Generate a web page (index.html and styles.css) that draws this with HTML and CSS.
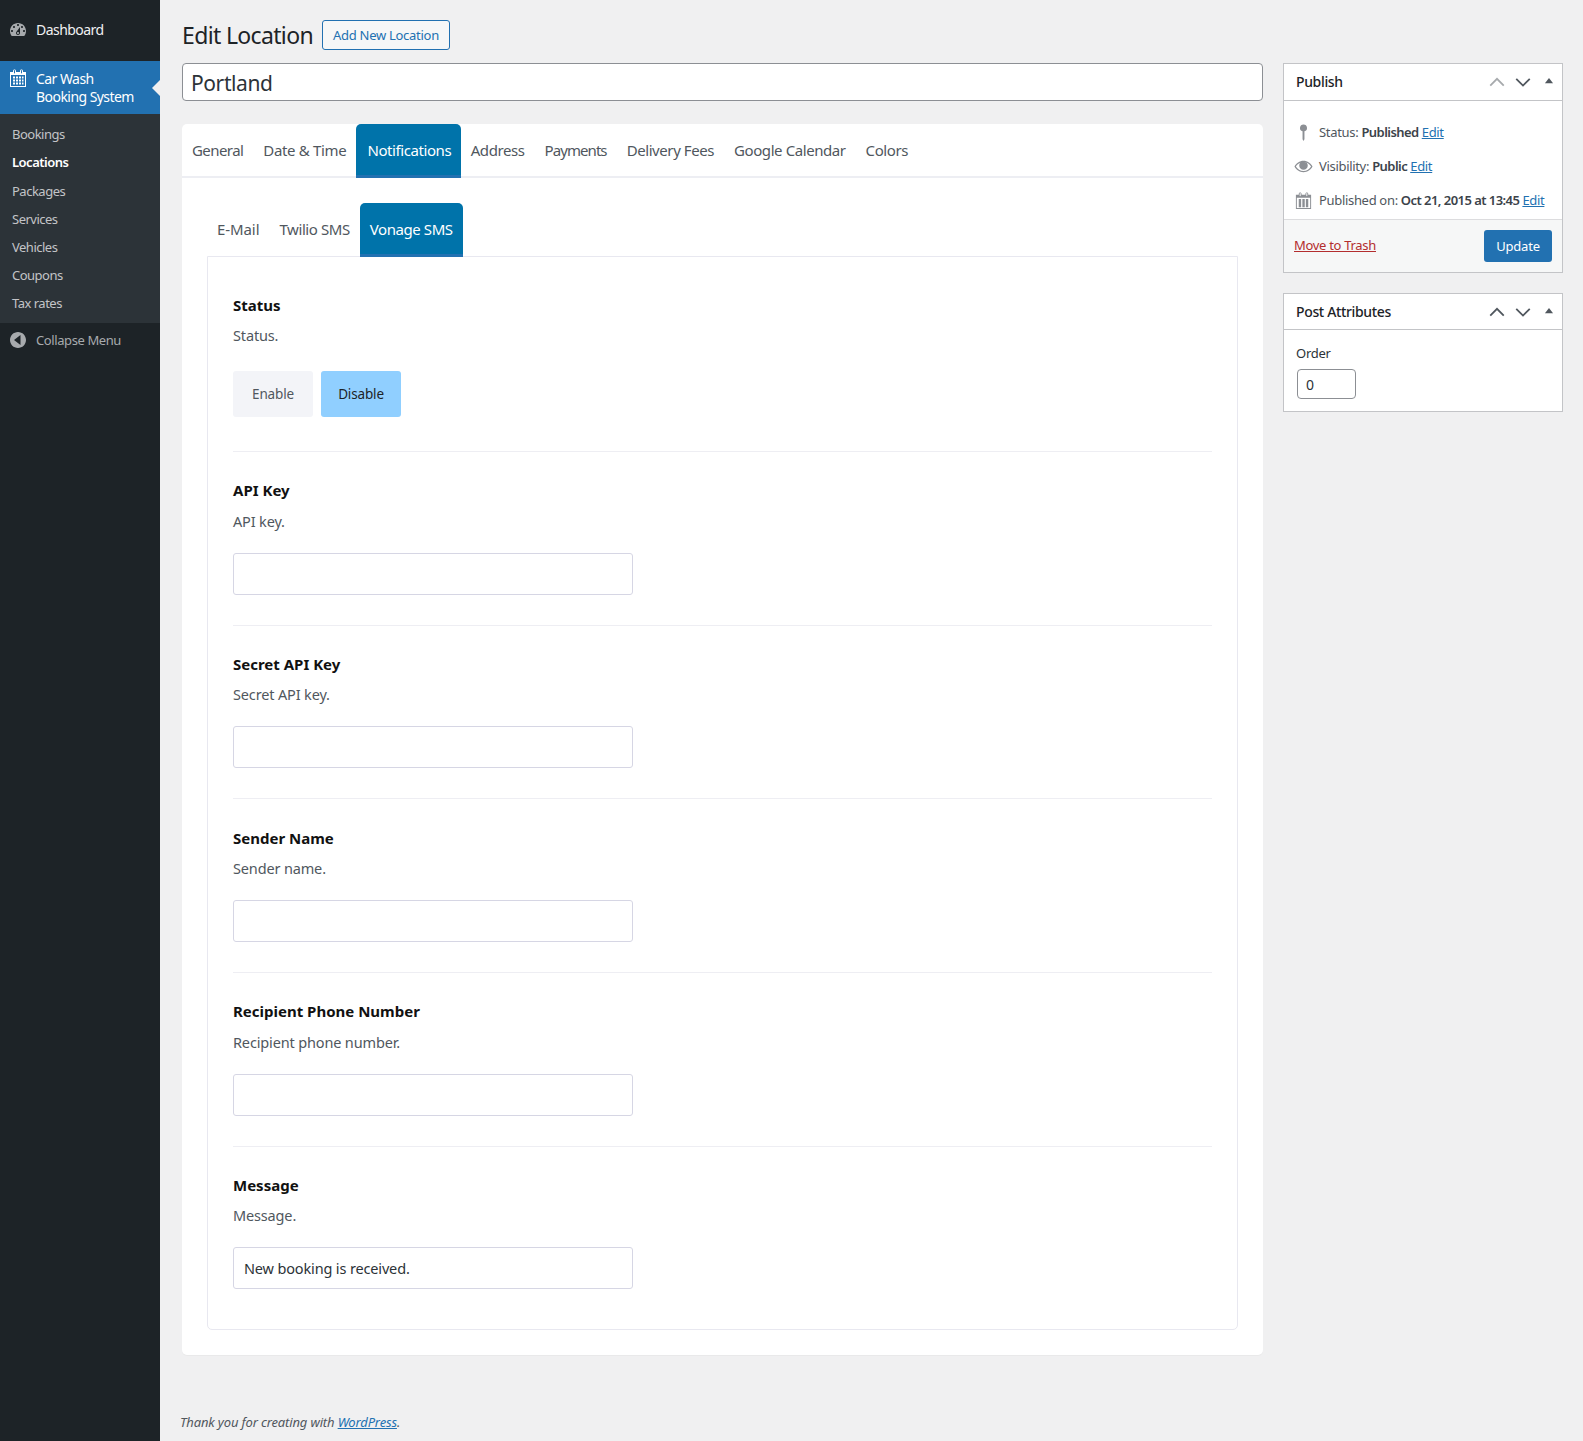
FILE: index.html
```html
<!DOCTYPE html>
<html lang="en">
<head>
<meta charset="utf-8">
<title>Edit Location</title>
<link rel="stylesheet" href="styles.css">
</head>
<body>
<div class="layout">
  <nav class="sidebar">
    <a class="menu-top dash">
      <svg class="mi" viewBox="0 0 20 20"><path d="M3.760 16h12.480c1.100-1.370 1.760-3.110 1.760-5 0-4.420-3.580-8-8-8s-8 3.580-8 8c0 1.890.66 3.630 1.760 5zM10 4c.55 0 1 .45 1 1s-.45 1-1 1-1-.45-1-1 .45-1 1-1zM6 6c.55 0 1 .45 1 1s-.45 1-1 1-1-.45-1-1 .45-1 1-1zm8 0c.55 0 1 .45 1 1s-.45 1-1 1-1-.45-1-1 .45-1 1-1zm-5.370 5.550L12 7v6c0 1.100-.9 2-2 2s-2-.9-2-2c0-.57.24-1.080.63-1.450zM4 10c.55 0 1 .45 1 1s-.45 1-1 1-1-.45-1-1 .45-1 1-1zm12 0c.55 0 1 .45 1 1s-.45 1-1 1-1-.45-1-1 .45-1 1-1zm-5 3c0-.55-.45-1-1-1s-1 .45-1 1 .45 1 1 1 1-.45 1-1z"/></svg>
      <span>Dashboard</span>
    </a>
    <a class="menu-top current">
      <svg class="mi white" viewBox="0 0 20 20"><path fill-rule="evenodd" d="M15 4h3v15H2V4h3V3c0-.8.7-1.500 1.500-1.500S8 2.200 8 3v1h4V3c0-.8.7-1.500 1.500-1.500S15 2.200 15 3v1zM6.500 5.500c.3 0 .5-.2.5-.5V2.500c0-.3-.2-.5-.5-.5S6 2.200 6 2.500V5c0 .3.2.5.5.5zm7 0c.3 0 .5-.2.5-.5V2.500c0-.3-.2-.5-.5-.5s-.5.2-.5.5V5c0 .3.2.5.5.5zM17 18V7H3v11h14zM5 8.500h2v2H5zm3 0h2v2H8zm3 0h2v2h-2zm3 0h1.500v2H14zM5 11.500h2v2H5zm3 0h2v2H8zm3 0h2v2h-2zm3 0h1.500v2H14zM5 14.500h2v2H5zm3 0h2v2H8zm3 0h2v2h-2zm3 0h1.500v2H14z"/></svg>
      <span>Car Wash<br>Booking System</span>
      <i class="notch"></i>
    </a>
    <ul class="submenu">
      <li>Bookings</li>
      <li class="on">Locations</li>
      <li>Packages</li>
      <li>Services</li>
      <li>Vehicles</li>
      <li>Coupons</li>
      <li>Tax rates</li>
    </ul>
    <a class="collapse">
      <svg class="mi" viewBox="0 0 20 20"><path d="M18 10c0-4.420-3.580-8-8-8s-8 3.580-8 8 3.580 8 8 8 8-3.580 8-8zm-5.500 5L6 10l6.500-5v10z" fill-rule="evenodd"/></svg>
      <span>Collapse Menu</span>
    </a>
  </nav>

  <main class="content">
    <header class="head">
      <h1>Edit Location</h1>
      <a class="add-new">Add New Location</a>
    </header>
    <div class="columns">
      <div class="primary">
        <div class="title-input">Portland</div>
        <section class="card">
          <div class="tabs top-tabs">
            <a class="tab">General</a>
            <a class="tab">Date &amp; Time</a>
            <a class="tab active">Notifications</a>
            <a class="tab">Address</a>
            <a class="tab">Payments</a>
            <a class="tab">Delivery Fees</a>
            <a class="tab">Google Calendar</a>
            <a class="tab">Colors</a>
          </div>
          <div class="card-body">
            <div class="tabs sub-tabs">
              <a class="tab">E-Mail</a>
              <a class="tab">Twilio SMS</a>
              <a class="tab active">Vonage SMS</a>
            </div>
            <div class="panel">
              <div class="row first">
                <h3>Status</h3>
                <p>Status.</p>
                <div class="toggle">
                  <a class="tbtn">Enable</a>
                  <a class="tbtn sel">Disable</a>
                </div>
              </div>
              <div class="row">
                <h3>API Key</h3>
                <p>API key.</p>
                <div class="field"></div>
              </div>
              <div class="row">
                <h3>Secret API Key</h3>
                <p>Secret API key.</p>
                <div class="field"></div>
              </div>
              <div class="row">
                <h3>Sender Name</h3>
                <p>Sender name.</p>
                <div class="field"></div>
              </div>
              <div class="row">
                <h3>Recipient Phone Number</h3>
                <p>Recipient phone number.</p>
                <div class="field"></div>
              </div>
              <div class="row last">
                <h3>Message</h3>
                <p>Message.</p>
                <div class="field">New booking is received.</div>
              </div>
            </div>
          </div>
        </section>
      </div>

      <aside class="side">
        <section class="box">
          <div class="box-head">
            <h2>Publish</h2>
            <svg class="ctl dim" viewBox="0 0 20 20"><path d="M2.500 14 10 6.500 17.500 14"/></svg>
            <svg class="ctl" viewBox="0 0 20 20"><path d="M2.500 6.500 10 14l7.500-7.500"/></svg>
            <svg class="tri" viewBox="0 0 20 20"><path d="M10 5.500l4.500 6h-9z"/></svg>
          </div>
          <div class="pub-list">
            <div class="pub">
              <svg class="pi" viewBox="0 0 20 20"><path d="M10 1.500a3.700 3.700 0 0 1 1 7.260V17l-1 2-1-2V8.760A3.700 3.700 0 0 1 10 1.500z"/></svg>
              <span>Status: <b>Published</b> <a>Edit</a></span>
            </div>
            <div class="pub">
              <svg class="pi" viewBox="0 0 20 20"><path fill-rule="evenodd" d="M10 4c-4.200 0-7.700 2.600-9.500 6 1.800 3.400 5.300 6 9.500 6s7.700-2.600 9.500-6c-1.800-3.400-5.300-6-9.500-6zm0 1.300c3.400 0 6.300 1.900 8 4.700-1.700 2.800-4.600 4.700-8 4.700S3.700 12.800 2 10c1.100-1.800 2.700-3.200 4.600-4-.7.800-1.100 1.800-1.100 3a4.500 4.500 0 0 0 9 0c0-1.200-.4-2.200-1.100-3-1-.5-2.200-.7-3.400-.7z"/></svg>
              <span>Visibility: <b>Public</b> <a>Edit</a></span>
            </div>
            <div class="pub">
              <svg class="pi" viewBox="0 0 20 20"><path fill-rule="evenodd" d="M15 4h3v15H2V4h3V3c0-.8.7-1.500 1.500-1.500S8 2.200 8 3v1h4V3c0-.8.7-1.500 1.500-1.500S15 2.200 15 3v1zM6.500 5.500c.3 0 .5-.2.5-.5V2.500c0-.3-.2-.5-.5-.5S6 2.200 6 2.500V5c0 .3.2.5.5.5zm7 0c.3 0 .5-.2.5-.5V2.500c0-.3-.2-.5-.5-.5s-.5.2-.5.5V5c0 .3.2.5.5.5zM17 18V7H3v11h14zM5 8.500h2.500V17H5zm3.800 0h2.500V17H8.800zm3.700 0H15V17h-2.500z"/></svg>
              <span>Published on: <b>Oct 21, 2015 at 13:45</b> <a>Edit</a></span>
            </div>
          </div>
          <div class="pub-foot">
            <a class="trash">Move to Trash</a>
            <a class="update">Update</a>
          </div>
        </section>
        <section class="box">
          <div class="box-head short">
            <h2>Post Attributes</h2>
            <svg class="ctl" viewBox="0 0 20 20"><path d="M2.500 14 10 6.500 17.500 14"/></svg>
            <svg class="ctl" viewBox="0 0 20 20"><path d="M2.500 6.500 10 14l7.500-7.500"/></svg>
            <svg class="tri" viewBox="0 0 20 20"><path d="M10 5.500l4.500 6h-9z"/></svg>
          </div>
          <div class="attr">
            <div class="attr-label">Order</div>
            <div class="order">0</div>
          </div>
        </section>
      </aside>
    </div>
    <footer class="foot"><em>Thank you for creating with <a>WordPress</a>.</em></footer>
  </main>
</div>
</body>
</html>
```
FILE: styles.css
```css
* { box-sizing: border-box; }
html, body { margin: 0; padding: 0; }
body {
  background: #f0f0f1;
  color: #3c434a;
  font-family: "Noto Sans", "Open Sans", sans-serif;
  font-size: 13px;
  line-height: 1.4;
}
a { text-decoration: none; }
h1, h2, h3, p, ul { margin: 0; padding: 0; }

.layout { display: flex; min-height: 1441px; }

/* Sidebar */
.sidebar {
  width: 160px;
  flex: none;
  background: #1d2327;
  display: flex;
  flex-direction: column;
}
.menu-top {
  display: flex;
  align-items: center;
  color: #f0f0f1;
  font-size: 14px;
  letter-spacing: -0.55px;
  line-height: 18px;
  padding-left: 8px;
  gap: 8px;
  position: relative;
}
.dash { height: 59px; margin-bottom: 2px; }
.current { height: 53px; background: #2271b1; color: #fff; }
.mi { width: 20px; height: 20px; fill: #a7aaad; flex: none; }
.mi.white { fill: #fff; margin-top: -19px; }
.notch {
  position: absolute;
  right: 0;
  top: 19px;
  border: 8px solid transparent;
  border-right-color: #f0f0f1;
  border-left-width: 0;
}
.submenu {
  list-style: none;
  background: #2c3338;
  padding: 6.2px 0 0;
  height: 209px;
}
.submenu li {
  height: 28.2px;
  line-height: 28px;
  padding-left: 12px;
  color: #c3c4c7;
  font-size: 13px;
  letter-spacing: -0.5px;
}
.submenu li.on { color: #fff; font-weight: 600; }
.collapse {
  display: flex;
  align-items: center;
  gap: 8px;
  height: 34px;
  padding-left: 8px;
  color: #a7aaad;
  font-size: 13px;
  letter-spacing: -0.4px;
}

/* Content */
.content { flex: 1; min-width: 0; padding: 0 20px 0 22px; display: flex; flex-direction: column; }
.head { display: flex; align-items: center; height: 63px; padding-top: 7px; }
h1 { font-size: 23px; font-weight: 400; color: #1d2327; letter-spacing: -0.65px; line-height: 30px; }
.add-new {
  margin-left: 9px;
  height: 30px;
  line-height: 28px;
  padding: 0 10px;
  width: 128px;
  white-space: nowrap;
  border: 1px solid #2271b1;
  border-radius: 3px;
  color: #2271b1;
  background: #f6f7f7;
  font-size: 13px;
  letter-spacing: -0.28px;
}
.columns { display: flex; gap: 20px; align-items: flex-start; }
.primary { flex: 1; min-width: 0; }
.title-input {
  height: 38px;
  background: #fff;
  border: 1px solid #8c8f94;
  border-radius: 4px;
  padding: 0 8px;
  font-size: 21px;
  line-height: 38px;
  color: #2c3338;
  letter-spacing: -0.4px;
}

.card {
  margin-top: 23px;
  background: #fff;
  border-radius: 5px;
  height: 1231px;
  box-shadow: 0 1px 1px rgba(0,0,0,0.03);
}
.tabs { display: flex; }
.tab {
  display: block;
  padding: 14px 10px 13px;
  height: 54px;
  line-height: 24px;
  font-size: 15px;
  letter-spacing: -0.42px;
  color: #50575e;
  border-bottom: 3px solid transparent;
}
.tab.active {
  background: #0073aa;
  color: #fff;
  border-bottom-color: #2271b1;
  border-radius: 5px 5px 0 0;
}
.top-tabs { border-bottom: 2px solid #edeef3; height: 54px; }
.top-tabs .tab:first-child { letter-spacing: -0.57px; }
.top-tabs .tab:nth-child(2) { letter-spacing: -0.33px; }
.top-tabs .tab:nth-child(3) { padding-left: 11px; padding-right: 9.500px; }
.top-tabs .tab:nth-child(5) { letter-spacing: -0.92px; }
.card-body { padding: 25px 25px 0; }
.sub-tabs { position: relative; z-index: 1; height: 54px; margin-bottom: -1px; }
.sub-tabs .tab:first-child { letter-spacing: -0.08px; }
.panel {
  border: 1px solid #e8e8f0;
  border-radius: 0 0 5px 5px;
  height: 1074px;
  padding: 0 25px;
}
.row { height: 173.7px; padding-top: 26.2px; border-bottom: 1px solid #eeeef3; }
.row.first { height: 195px; padding-top: 36px; }
.row.first p { margin-top: 6px; }
.row.last { border-bottom: 0; }
h3 { font-size: 15px; line-height: 24px; font-weight: 700; color: #111; letter-spacing: 0; }
.row p { font-size: 14.5px; line-height: 24px; margin-top: 6.45px; color: #50575e; letter-spacing: -0.15px; }
.toggle { display: flex; gap: 8px; margin-top: 24px; }
.tbtn {
  width: 80px;
  height: 46px;
  line-height: 46px;
  text-align: center;
  background: #f3f4f8;
  border-radius: 3px;
  font-size: 13.5px;
  letter-spacing: -0.15px;
  color: #50575e;
}
.tbtn.sel { background: #90cfff; color: #1d2327; }
.field {
  width: 400px;
  height: 42px;
  margin-top: 20px;
  border: 1px solid #d6d6e4;
  border-radius: 3px;
  padding: 0 10px;
  line-height: 40px;
  font-size: 14.5px;
  color: #2c3338;
  letter-spacing: -0.15px;
}

/* Side */
.side { width: 280px; flex: none; display: flex; flex-direction: column; gap: 20px; }
.box { background: #fff; border: 1px solid #c3c4c7; }
.box-head {
  display: flex;
  align-items: center;
  height: 37px;
  border-bottom: 1px solid #c3c4c7;
  padding: 0 4px 0 12px;
  gap: 8px;
}
.box-head.short { height: 36px; }
.box-head h2 { flex: 1; font-size: 14px; font-weight: 500; color: #1d2327; letter-spacing: -0.35px; }
.ctl { width: 18px; height: 18px; fill: none; stroke: #50575e; stroke-width: 2; }
.ctl.dim { stroke: #a7aaad; }
.tri { width: 18px; height: 18px; fill: #50575e; }
.pub-list { padding: 14px 0 3px; height: 118px; }
.pub { display: flex; align-items: center; height: 34px; padding-left: 10px; gap: 6px; color: #50575e; font-size: 13px; letter-spacing: -0.32px; }
.pub b { font-weight: 600; color: #3c434a; letter-spacing: -0.55px; }
.pub a, .foot a { color: #2271b1; text-decoration: underline; }
.pi { width: 19px; height: 19px; fill: #8c8f94; flex: none; }
.pub-foot {
  display: flex;
  align-items: center;
  justify-content: space-between;
  height: 53px;
  border-top: 1px solid #dcdcde;
  background: #f6f7f7;
  padding: 0 10px;
}
.trash { color: #b32d2e; text-decoration: underline; font-size: 13px; letter-spacing: -0.3px; margin-top: -2px; }
.update {
  background: #2271b1;
  color: #fff;
  height: 32px;
  line-height: 32px;
  width: 68px;
  text-align: center;
  border-radius: 3px;
  font-size: 13px;
  letter-spacing: -0.2px;
}
.attr { padding: 14px 12px 12px; height: 81px; }
.attr-label { font-size: 13px; color: #2c3338; line-height: 18px; letter-spacing: -0.25px; }
.order {
  width: 59px;
  height: 30px;
  margin: 7px 0 0 1px;
  border: 1px solid #8c8f94;
  border-radius: 4px;
  padding: 0 8px;
  line-height: 30px;
  font-size: 14px;
  color: #2c3338;
}

.foot { margin-top: 57px; margin-left: -2px; font-size: 13px; line-height: 20px; color: #50575e; letter-spacing: -0.15px; }
```
